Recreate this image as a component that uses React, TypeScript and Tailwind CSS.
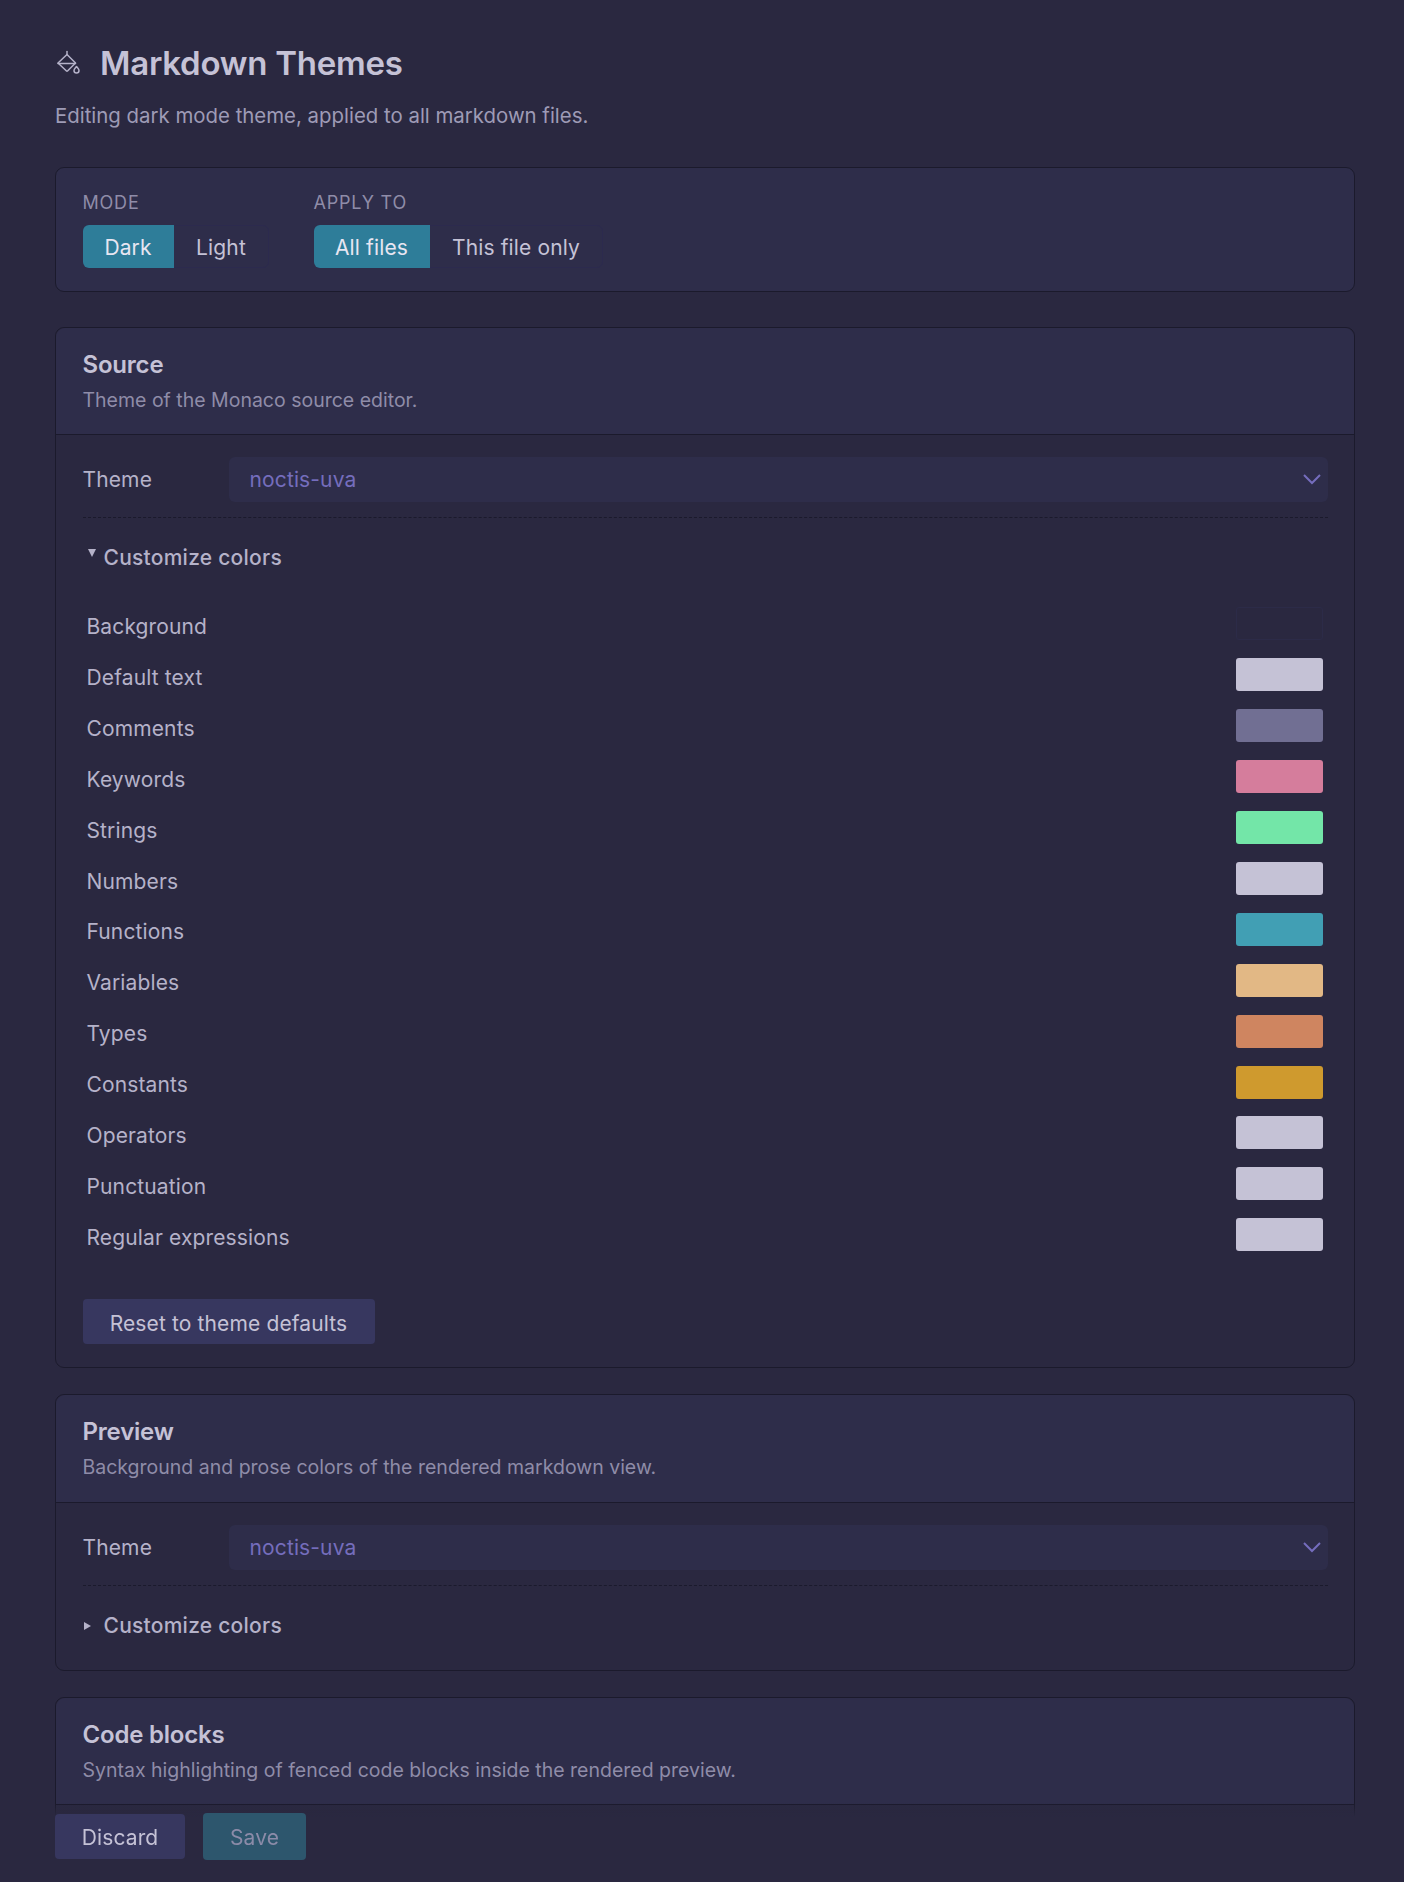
const colorRows = [
    { name: 'Background', color: null },
    { name: 'Default text', color: 'bg-[#c5c2d6]' },
    { name: 'Comments', color: 'bg-[#716f93]' },
    { name: 'Keywords', color: 'bg-[#d57d9c]' },
    { name: 'Strings', color: 'bg-[#73e6a8]' },
    { name: 'Numbers', color: 'bg-[#c5c2d6]' },
    { name: 'Functions', color: 'bg-[#419fb4]' },
    { name: 'Variables', color: 'bg-[#e2b885]' },
    { name: 'Types', color: 'bg-[#cf8560]' },
    { name: 'Constants', color: 'bg-[#cf9a2e]' },
    { name: 'Operators', color: 'bg-[#c5c2d6]' },
    { name: 'Punctuation', color: 'bg-[#c5c2d6]' },
    { name: 'Regular expressions', color: 'bg-[#c5c2d6]' },
];

function Segmented({ label, options, className }: { label: string; options: { name: string; width: string }[]; className: string }) {
    return (
        <div className={className}>
            <div className="text-[18px] leading-[20px] tracking-[0.8px] uppercase text-[#8f8ca8]">{label}</div>
            <div className="mt-[12px] flex h-[43px] rounded-[6px] border border-[#2c2a4e]">
                {options.map((option, i) => (
                    <div
                        key={option.name}
                        className={`flex items-center justify-center pt-[2px] text-[21px] tracking-[0.13px] ${option.width} ${i === 0 ? '-m-px h-[43px] rounded-l-[6px] bg-[#2e7d99] text-[#e8e6f2]' : 'pl-[2px] text-[#c5c2d6]'}`}
                    >
                        {option.name}
                    </div>
                ))}
            </div>
        </div>
    );
}

function ThemeSelect() {
    return (
        <div className="flex items-center">
            <div className="w-[146px] text-[21px] tracking-[0.13px] text-[#b5b2c9]">Theme</div>
            <div className="flex h-[45px] flex-1 items-center justify-between rounded-[6px] bg-[#2e2d4a] pl-[21px] pr-[7px] text-[21px] tracking-[0.13px] text-[#756dbd]">
                <span>noctis-uva</span>
                <svg width="18" height="11" viewBox="0 0 18 11" fill="none" stroke="#756dbd" strokeWidth="2">
                    <path d="M1 1l8 8 8-8" />
                </svg>
            </div>
        </div>
    );
}

function Section({ title, description, children }: { title: string; description: string; children: React.ReactNode }) {
    return (
        <section className="rounded-[9px] border border-[#1b1a2c]">
            <div className="h-[107.5px] rounded-t-[9px] border-b border-[#1b1a2c] bg-[#2e2d4a] px-[26.5px] pt-[24px]">
                <h2 className="text-[24px] font-semibold leading-[26px] tracking-[-0.2px] text-[#c5c2d6]">{title}</h2>
                <p className="mt-[10px] text-[19.5px] leading-[24px] text-[#8f8ca8]">{description}</p>
            </div>
            {children}
        </section>
    );
}

export default function App() {
    return (
        <div className="h-screen overflow-hidden bg-[#2a2840] pl-[55px] pr-[49px] font-['Inter',sans-serif]">
            {/* Page header */}
            <div className="flex items-center pt-[43px]">
                <svg width="27" height="27" viewBox="0 0 27 27" fill="none" stroke="#b5b2c9" strokeWidth="1.5" strokeLinejoin="round" strokeLinecap="round">
                    <path d="M12 1.5v3" />
                    <path d="M12 4.5l8.5 8.5-8 8q-.5.5-1 0l-8.500-8z" />
                    <path d="M3 13.500h17.500" />
                    <path d="M21.500 16.500c-1 1.500-2.500 2.500-2.500 4a2.500 2.500 0 0 0 5 0c0-1.500-1.500-2.500-2.500-4z" />
                </svg>
                <h1 className="ml-[18px] text-[33px] font-semibold leading-[40px] tracking-[-0.25px] text-[#c5c2d6]">Markdown Themes</h1>
            </div>
            <p className="mt-[21px] text-[20.4px] leading-[24px] text-[#9e9bb6]">Editing dark mode theme, applied to all markdown files.</p>

            {/* Mode toolbar */}
            <div className="mt-[39px] flex h-[125px] rounded-[9px] border border-[#1b1a2c] bg-[#2e2d4a] px-[26.5px] pt-[25px]">
                <Segmented
                    label="Mode"
                    className="w-[186px]"
                    options={[
                        { name: 'Dark', width: 'w-[91px]' },
                        { name: 'Light', width: 'w-[95px]' },
                    ]}
                />
                <Segmented
                    label="Apply to"
                    className="ml-[45px] w-[289px]"
                    options={[
                        { name: 'All files', width: 'w-[116px]' },
                        { name: 'This file only', width: 'w-[173px]' },
                    ]}
                />
            </div>

            <div className="mt-[34.6px] flex flex-col gap-[26px]">
                <Section title="Source" description="Theme of the Monaco source editor.">
                    <div className="px-[26.5px] pb-[4px] pt-[22px]">
                        <ThemeSelect />
                        <div className="mt-[15px] border-t border-dashed border-[#1b1a2c]" />
                        <div className="relative flex h-[78px] items-center pl-[21px] pt-[2px] text-[21px] font-medium tracking-[0.25px] text-[#b5b2c9]">
                            <svg className="absolute left-[5px] top-[31px]" width="8" height="8" viewBox="0 0 8 8" fill="#b5b2c9">
                                <path d="M0 0h8L4 8z" />
                            </svg>
                            Customize colors
                        </div>
                        <div className="pl-[4px] pr-[5px] pt-[2px]">
                            {colorRows.map((row) => (
                                <div key={row.name} className="flex h-[50.95px] items-center justify-between text-[21px] tracking-[0.13px] text-[#b5b2c9]">
                                    <span className="pt-[6px]">{row.name}</span>
                                    {row.color ? (
                                        <div className={`h-[33px] w-[87px] rounded-[3px] ${row.color}`} />
                                    ) : (
                                        <div className="h-[33px] w-[87px] rounded-[3px] border border-[#2c2b48]" />
                                    )}
                                </div>
                            ))}
                        </div>
                        <button className="mb-[19px] mt-[39px] flex h-[45px] w-[292px] items-center justify-center rounded-[4px] bg-[#37375f] pt-[3px] text-[21px] tracking-[0.13px] text-[#c5c2d6]">
                            Reset to theme defaults
                        </button>
                    </div>
                </Section>

                <Section title="Preview" description="Background and prose colors of the rendered markdown view.">
                    <div className="px-[26.5px] pb-[6px] pt-[22px]">
                        <ThemeSelect />
                        <div className="mt-[15px] border-t border-dashed border-[#1b1a2c]" />
                        <div className="relative flex h-[78px] items-center pl-[21px] pt-[2px] text-[21px] font-medium tracking-[0.25px] text-[#b5b2c9]">
                            <svg className="absolute left-[1px] top-[36px]" width="7" height="8" viewBox="0 0 7 8" fill="#b5b2c9">
                                <path d="M0 0l7 4-7 4z" />
                            </svg>
                            Customize colors
                        </div>
                    </div>
                </Section>

                <Section title="Code blocks" description="Syntax highlighting of fenced code blocks inside the rendered preview.">
                    <div className="h-[120px]" />
                </Section>
            </div>

            {/* Save bar */}
            <div className="sticky bottom-0 flex h-[79px] items-start gap-[18px] bg-[linear-gradient(to_bottom,transparent,#2a2840_14px)] pt-[10px]">
                <button className="mt-[1px] h-[45px] w-[130px] rounded-[4px] bg-[#37375f] pt-[2px] text-[21px] tracking-[0.13px] text-[#c5c2d6]">Discard</button>
                <button className="h-[47px] w-[103px] rounded-[4px] bg-[#2d566d] pt-[2px] text-[21px] tracking-[0.13px] text-[#8b8ba8]">Save</button>
            </div>
        </div>
    );
}
